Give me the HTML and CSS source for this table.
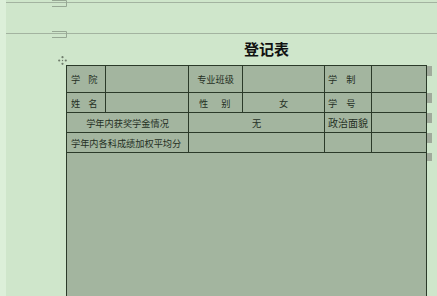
FILE: index.html
```html
<!DOCTYPE html>
<html lang="zh-CN">

<head>
    <meta charset="UTF-8">
    <meta name="viewport" content="width=device-width, initial-scale=1.0">
    <title>登记表</title>
    <link rel="stylesheet" href="styles.css">
</head>

<body>
    <div class="gutter"></div>
    <div class="page">
        <!-- page breaks from the previous pages -->
        <div class="break break-first">
            <svg class="corner" width="16" height="7" viewBox="0 0 16 7">
                <path d="M0 0.5H14.5V6.5H0" fill="none" stroke="#97a894" stroke-width="1"></path>
            </svg>
        </div>
        <div class="break">
            <svg class="corner" width="16" height="7" viewBox="0 0 16 7">
                <path d="M0 0.5H14.5V6.5H0" fill="none" stroke="#97a894" stroke-width="1"></path>
            </svg>
        </div>

        <h1 class="title">登记表</h1>

        <div class="sheet">
            <span class="handle">
                <svg width="9" height="9" viewBox="0 0 9 9">
                    <circle cx="4.5" cy="1.2" r="1.1"></circle>
                    <circle cx="4.5" cy="7.8" r="1.1"></circle>
                    <circle cx="1.2" cy="4.5" r="1.1"></circle>
                    <circle cx="7.8" cy="4.5" r="1.1"></circle>
                    <circle cx="4.5" cy="4.5" r="0.7"></circle>
                </svg>
            </span>
            <table class="form">
                <colgroup>
                    <col class="c1">
                    <col class="c2">
                    <col class="c3">
                    <col class="c4">
                    <col class="c5">
                    <col class="c6">
                </colgroup>
                <tr class="r1">
                    <td class="spread">学院</td>
                    <td></td>
                    <td class="mid">专业班级</td>
                    <td></td>
                    <td class="spread short">学制</td>
                    <td class="end"><i class="mark"></i></td>
                </tr>
                <tr class="r2">
                    <td class="spread">姓名</td>
                    <td></td>
                    <td class="mid wide">性别</td>
                    <td class="mid">女</td>
                    <td class="spread short">学号</td>
                    <td class="end"><i class="mark"></i></td>
                </tr>
                <tr class="r3">
                    <td colspan="2" class="mid">学年内获奖学金情况</td>
                    <td colspan="2" class="mid">无</td>
                    <td class="mid big">政治面貌</td>
                    <td class="end"><i class="mark"></i></td>
                </tr>
                <tr class="r4">
                    <td colspan="2">学年内各科成绩加权平均分</td>
                    <td colspan="2"></td>
                    <td></td>
                    <td class="end"><i class="mark"></i></td>
                </tr>
                <tr class="r5">
                    <!-- the page ends before this cell does -->
                    <td colspan="6" class="end open"><i class="mark"></i></td>
                </tr>
            </table>
        </div>
    </div>
</body>

</html>
```

FILE: styles.css
```css
* {
    margin: 0;
    padding: 0;
    box-sizing: border-box;
}

body {
    display: flex;
    height: 296px;
    overflow: hidden;
    background: #cfe6cb;
    font-family: "Noto Sans CJK SC", "Liberation Sans", sans-serif;
    color: #25301f;
}

.gutter {
    width: 6px;
    flex: none;
    background: #dcefd9;
}

.page {
    flex: 1;
}

/* page break lines */
.break {
    position: relative;
    height: 31px;
    border-bottom: 1px solid #a3b3a0;
}

.break-first {
    height: 3px;
}

.corner {
    position: absolute;
    left: 46px;
    bottom: -5px;
    display: block;
}

.title {
    padding: 6px 0 0 238px;
    height: 31px;
    font-size: 15px;
    line-height: 18px;
    font-weight: bold;
    color: #111;
}

.sheet {
    position: relative;
    margin-left: 60px;
    width: 361px;
}

.handle {
    position: absolute;
    left: -8px;
    top: -9px;
    line-height: 0;
}

.handle svg {
    fill: #6f7c6c;
}

/* the form grid */
.form {
    width: 361px;
    table-layout: fixed;
    border-collapse: collapse;
    background: #a3b59f;
    font-size: 9.2px;
    line-height: 12px;
}

.form td {
    border: 1px solid #2b3a29;
    padding: 0 0 0 4px;
    white-space: nowrap;
    vertical-align: middle;
}

.form td.open {
    border-bottom: none;
}

.c1 { width: 39px; }
.c2 { width: 83px; }
.c3 { width: 54px; }
.c4 { width: 82px; }
.c5 { width: 47px; }
.c6 { width: 55px; }

.r1 { height: 27px; }
.r2 { height: 20px; }
.r3 { height: 20px; }
.r4 { height: 20px; }
.r5 { height: 143px; }

.form td.mid {
    text-align: center;
    padding: 0;
}

.form td.spread {
    letter-spacing: 8px;
}

.form td.short {
    padding-left: 3px;
    letter-spacing: 9px;
}

.form td.wide {
    letter-spacing: 13px;
    padding-left: 10px;
    text-align: left;
}

.form td.big {
    font-size: 10px;
}

/* end-of-row markers */
.end {
    position: relative;
}

.mark {
    position: absolute;
    top: 0;
    left: 100%;
    margin-left: 1px;
    width: 5px;
    height: 10px;
    background: #a1ab9c;
}

.r5 .mark {
    top: 0;
    height: 8px;
}
```
